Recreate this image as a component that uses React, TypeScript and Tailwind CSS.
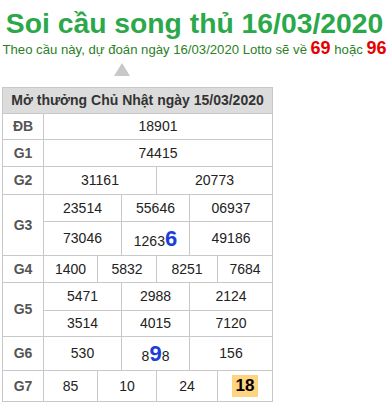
import React from "react";

const B = "border-[#c8c8c8]";

function Cell({ w, children, last, className = "" }: { w?: number; children: React.ReactNode; last?: boolean; className?: string }) {
  return (
    <div
      className={`flex items-center justify-center ${last ? "flex-1" : "border-r " + B} ${className}`}
      style={w ? { width: w } : undefined}
    >
      {children}
    </div>
  );
}

function Row({ h, label, cells, widths }: { h: number; label: string; cells: React.ReactNode[]; widths: number[] }) {
  return (
    <div className={`flex border-b ${B}`} style={{ height: h }}>
      <div className={`w-[41px] shrink-0 border-r ${B} flex items-center justify-center font-bold text-[#555]`}>{label}</div>
      <div className="flex flex-1">
        {cells.map((c, i) => (
          <Cell key={i} w={i < cells.length - 1 ? widths[i] : undefined} last={i === cells.length - 1}>
            {c}
          </Cell>
        ))}
      </div>
    </div>
  );
}

function SubRows({ label, rows, heights, widths }: { label: string; rows: React.ReactNode[][]; heights: number[]; widths: number[] }) {
  return (
    <div className={`flex border-b ${B}`}>
      <div className={`w-[41px] shrink-0 border-r ${B} flex items-center justify-center font-bold text-[#555]`}>{label}</div>
      <div className="flex flex-1 flex-col">
        {rows.map((r, ri) => (
          <div key={ri} className={`flex ${ri < rows.length - 1 ? "border-b " + B : ""}`} style={{ height: heights[ri] - (ri < rows.length - 1 ? 0 : 1) }}>
            {r.map((c, i) => (
              <Cell key={i} w={i < r.length - 1 ? widths[i] : undefined} last={i === r.length - 1}>
                {c}
              </Cell>
            ))}
          </div>
        ))}
      </div>
    </div>
  );
}

const Big = ({ children }: { children: React.ReactNode }) => (
  <span className="text-[22px] font-bold text-[#1c3ed8] leading-none">{children}</span>
);

export default function App() {
  const w3 = [78, 68];
  const w4 = [54, 59, 61];
  return (
    <div className="w-[389px] h-[405px] bg-white overflow-hidden" style={{ fontFamily: '"Liberation Sans", Arial, sans-serif' }}>
      <h1 className="text-center text-[28.3px] font-bold text-[#2ba84a] leading-none pt-[9px] h-[38px] whitespace-nowrap">Soi cầu song thủ 16/03/2020</h1>
      <p className="text-center text-[13.15px] text-[#2b7f26] leading-[20px] whitespace-nowrap">
        Theo cầu này, dự đoán ngày 16/03/2020 Lotto sẽ về <span className="text-[18px] font-bold text-[#e60000]">69</span> hoặc{" "}
        <span className="text-[18px] font-bold text-[#e60000]">96</span>
      </p>
      <div className="ml-[114px] mt-[3px] h-0 w-0 border-x-[8px] border-b-[13px] border-x-transparent border-b-[#c8c8c8]" />
      <div className={`ml-[2px] mt-[11px] w-[271px] border-l border-r border-t border-b ${B} text-[14px] text-[#222]`}>
        <div className={`h-[26px] bg-[#dcdcdc] border-b ${B} flex items-center justify-center font-bold text-[#333]`}>
          Mở thưởng Chủ Nhật ngày 15/03/2020
        </div>
        <Row h={26} label="ĐB" widths={[]} cells={["18901"]} />
        <Row h={27} label="G1" widths={[]} cells={["74415"]} />
        <Row h={28} label="G2" widths={[113]} cells={["31161", "20773"]} />
        <SubRows
          label="G3"
          widths={w3}
          heights={[27, 34]}
          rows={[
            ["23514", "55646", "06937"],
            [
              "73046",
              <span className="pt-[2px]">
                1263<Big>6</Big>
              </span>,
              "49186",
            ],
          ]}
        />
        <Row h={27} label="G4" widths={w4} cells={["1400", "5832", "8251", "7684"]} />
        <SubRows
          label="G5"
          widths={w3}
          heights={[28, 26]}
          rows={[
            ["5471", "2988", "2124"],
            ["3514", "4015", "7120"],
          ]}
        />
        <Row
          h={34}
          label="G6"
          widths={w3}
          cells={[
            "530",
            <span className="pt-[2px]">
              8<Big>9</Big>8
            </span>,
            "156",
          ]}
        />
        <div className={`flex`} style={{ height: 30 }}>
          <div className={`w-[41px] shrink-0 border-r ${B} flex items-center justify-center font-bold text-[#555]`}>G7</div>
          <div className="flex flex-1">
            <Cell w={54}>85</Cell>
            <Cell w={59}>10</Cell>
            <Cell w={61}>24</Cell>
            <Cell last>
              <span className="bg-[#ffd480] px-[4px] h-[22px] flex items-center font-bold text-[17px] text-black">18</span>
            </Cell>
          </div>
        </div>
      </div>
    </div>
  );
}
